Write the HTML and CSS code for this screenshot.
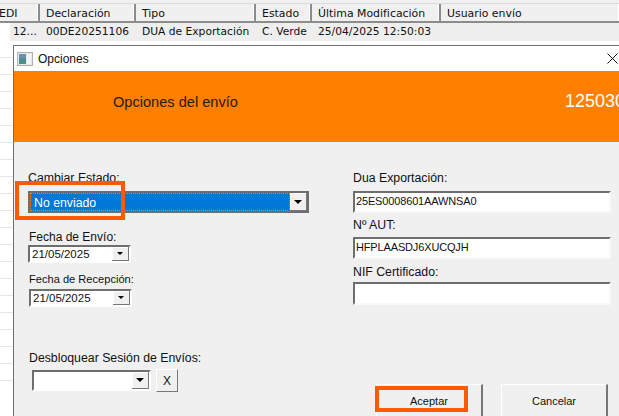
FILE: index.html
```html
<!DOCTYPE html>
<html lang="es">
<head>
<meta charset="utf-8">
<title>Opciones</title>
<link rel="stylesheet" href="styles.css">
</head>
<body>
<div class="screen">
  <div class="grid-top"></div>
  <div class="grid-head">
    <div class="hc c-edi">EDI</div>
    <div class="hc c-dec">Declaración</div>
    <div class="hc c-tipo">Tipo</div>
    <div class="hc c-est">Estado</div>
    <div class="hc c-mod">Última Modificación</div>
    <div class="hc c-usr">Usuario envío</div>
  </div>
  <div class="grid-row">
    <div class="dc c-edi first">12...</div>
    <div class="dc c-dec">00DE20251106</div>
    <div class="dc c-tipo">DUA de Exportación</div>
    <div class="dc c-est">C. Verde</div>
    <div class="dc c-mod">25/04/2025 12:50:03</div>
    <div class="dc c-usr"></div>
  </div>
  <div class="grid-lines">
    <div></div><div></div><div></div><div></div><div></div><div></div><div></div><div></div><div></div><div></div><div></div><div></div><div></div><div></div><div></div><div></div><div></div><div></div><div></div><div></div>
  </div>

  <section class="dialog">
    <header class="titlebar">
      <svg class="appicon" width="16" height="14" viewBox="0 0 16 14">
        <rect x="0.5" y="0.5" width="15" height="13" fill="#e8e8e8" stroke="#b0b0b0"/>
        <rect x="2" y="2" width="7" height="10" fill="#4f8f8a"/>
        <rect x="2" y="2" width="7" height="4" fill="#6f8fae"/>
        <rect x="10" y="2" width="4" height="10" fill="#f4f4f4"/>
      </svg>
      <span class="title">Opciones</span>
      <svg class="close" width="11" height="11" viewBox="0 0 11 11"><path d="M.5.5l10 10M10.500.5l-10 10" stroke="#111" stroke-width="1" fill="none"/></svg>
    </header>
    <div class="banner">
      <span class="banner-title">Opciones del envío</span>
      <span class="banner-num">125030</span>
    </div>
    <div class="content">
      <div class="columns">
        <div class="left">
          <label class="lb">Cambiar Estado:</label>
          <div class="combo combo-main">
            <div class="combo-val selected"><span>No enviado</span></div>
            <div class="arrow-btn"><i class="tri"></i></div>
          </div>
          <label class="lb lb-envio">Fecha de Envío:</label>
          <div class="combo date">
            <div class="combo-val">21/05/2025</div>
            <div class="arrow-btn small"><i class="tri tiny"></i></div>
          </div>
          <label class="lb lb-recep">Fecha de Recepción:</label>
          <div class="combo date date2">
            <div class="combo-val">21/05/2025</div>
            <div class="arrow-btn small"><i class="tri tiny"></i></div>
          </div>
        </div>
        <div class="right">
          <label class="lb">Dua Exportación:</label>
          <div class="field field-first">25ES0008601AAWNSA0</div>
          <label class="lb lb-r">Nº AUT:</label>
          <div class="field">HFPLAASDJ6XUCQJH</div>
          <label class="lb lb-r lb-nif">NIF Certificado:</label>
          <div class="field field-last"></div>
        </div>
      </div>
      <div class="footer">
        <div class="unlock">
          <label class="lb">Desbloquear Sesión de Envíos:</label>
          <div class="unlock-row">
            <div class="combo unlock-combo">
              <div class="combo-val"></div>
              <div class="arrow-btn"><i class="tri"></i></div>
            </div>
            <button class="btn btn-x">X</button>
          </div>
        </div>
        <div class="actions">
          <button class="btn btn-main">Aceptar</button>
          <button class="btn btn-main">Cancelar</button>
        </div>
      </div>
    </div>
  </section>
  <div class="mark mark-combo"></div>
  <div class="mark mark-ok"></div>
</div>
</body>
</html>
```
FILE: styles.css
```css
* { box-sizing: border-box; }
html, body { margin: 0; padding: 0; }
body { width: 619px; height: 416px; overflow: hidden; background: #fff; font-family: "DejaVu Sans", sans-serif; }
.screen { position: relative; width: 619px; height: 416px; overflow: hidden; background: #fff; }

.grid-top { height: 4px; background: #f0f0f0; border-bottom: 1px solid #dcdcdc; }
.grid-head { display: flex; height: 19px; background: #f0f0f0; border-bottom: 2px solid #8c8c8c; }
.hc { font-size: 10.900px; line-height: 19px; padding-left: 6px; color: #111; border-right: 2px solid #8c8c8c; box-shadow: inset -1px 0 0 #fff; white-space: nowrap; }
.grid-row { display: flex; height: 18px; background: #eeeeee; }
.dc { font-size: 10.700px; line-height: 18px; padding-left: 6px; color: #111; white-space: nowrap; }
.c-edi { width: 40px; flex: none; }
.c-dec { width: 96px; flex: none; }
.c-tipo { width: 120px; flex: none; }
.c-est { width: 56px; flex: none; }
.c-mod { width: 129px; flex: none; }
.c-usr { flex: 1; border-right: 0; }
.hc.c-edi { padding-left: 0; text-indent: -1px; }
.dc.first { padding-left: 13px; background: linear-gradient(90deg, #fff 10px, #eee 10px); }
.grid-lines div { height: 17px; border-bottom: 1px solid #e6e6e6; }

.dialog { position: absolute; left: 13px; top: 45px; width: 620px; height: 380px; background: #f0f0f0; border: 1px solid #707070; border-right: 0; border-bottom: 0; display: flex; flex-direction: column; }
.titlebar { height: 25px; background: #fff; display: flex; align-items: center; padding-left: 3px; flex: none; }
.appicon { margin-right: 5px; }
.title { font-family: "Liberation Sans", sans-serif; font-size: 12px; color: #111; }
.close { margin-left: auto; margin-right: 15px; }
.banner { height: 71px; background: #ff8000; flex: none; display: flex; align-items: center; padding-bottom: 10px; }
.banner-title { font-family: "Liberation Sans", sans-serif; font-size: 14.600px; color: #2a1a00; margin-left: 99px; }
.banner-num { font-family: "Liberation Sans", sans-serif; font-size: 18px; color: #fff; margin-left: 327px; }

.content { flex: 1; display: flex; flex-direction: column; }
.columns { display: flex; height: 192px; padding-top: 29px; }
.left { width: 339px; padding-left: 14px; flex: none; display: flex; flex-direction: column; align-items: flex-start; }
.right { width: 258px; flex: none; display: flex; flex-direction: column; }
.lb { font-family: "Liberation Sans", sans-serif; font-size: 12.300px; line-height: 15px; color: #111; white-space: nowrap; display: block; }

.combo { display: flex; border: 2px solid; border-color: #6e6e6e #fff #fff #6e6e6e; background: #fff; font-family: "Liberation Sans", sans-serif; font-size: 12px; color: #111; }
.combo-val { flex: 1; min-width: 0; line-height: 16px; padding-left: 2px; white-space: nowrap; overflow: hidden; }
.combo-main { width: 281px; height: 22px; margin-top: 5px; border-color: #6e6e6e; }
.combo-val.selected { background: #0078d7; color: #fff; outline: 1px dotted #f08000; outline-offset: -1px; line-height: 20px; font-size: 12.300px; padding-left: 4px; }
.arrow-btn { width: 17px; flex: none; background: #f0f0f0; display: flex; align-items: center; justify-content: center; border-right: 1px solid #777; border-bottom: 1px solid #777; box-shadow: inset 1px 1px 0 #fff; }
.tri { display: block; width: 0; height: 0; border-left: 4px solid transparent; border-right: 4px solid transparent; border-top: 4px solid #000; }
.tri.tiny { border-left-width: 3px; border-right-width: 3px; border-top-width: 3px; }
.date { width: 103px; height: 18px; font-size: 11.500px; }
.date .combo-val { line-height: 15px; padding-left: 2px; }
.date2 { margin-left: 1px; margin-top: 2px; }
.lb-envio { margin-top: 17px; margin-left: 1px; font-size: 12px; }
.lb-recep { margin-top: 9px; margin-left: 1px; font-size: 11.100px; }
.field { height: 22px; width: 258px; border: 2px solid; border-color: #6e6e6e #f8f8f8 #f8f8f8 #6e6e6e; background: #fff; font-family: "Liberation Sans", sans-serif; font-size: 11px; letter-spacing: -0.150px; line-height: 16px; color: #111; padding-left: 1px; margin-top: 4px; }
.field-first { margin-top: 5px; }
.field-last { height: 23px; margin-top: 2px; }
.lb-r { margin-top: 5px; }
.lb-nif { margin-top: 6px; }

.footer { display: flex; align-items: flex-start; }
.unlock { width: 362px; flex: none; padding-left: 15px; padding-top: 17px; }
.unlock-row { display: flex; align-items: flex-start; margin-top: 3px; margin-left: 3px; }
.unlock-combo { width: 119px; height: 21px; margin-top: 1px; }
.btn { font-family: "Liberation Sans", sans-serif; font-size: 11px; color: #111; background: #f0f0f0; border: 1px solid; border-color: #fff #777 #777 #fff; padding: 0; }
.btn-x { width: 22px; height: 23px; margin-left: 5px; font-size: 12px; }
.actions { display: flex; gap: 18px; padding-top: 50px; }
.btn-main { width: 107px; height: 34px; border-width: 1px 2px 2px 1px; }

.mark { position: absolute; border: 4px solid #ff5a00; pointer-events: none; }
.mark-combo { left: 15px; top: 181px; width: 110px; height: 39px; }
.mark-ok { left: 375px; top: 386px; width: 93px; height: 26px; }
```
